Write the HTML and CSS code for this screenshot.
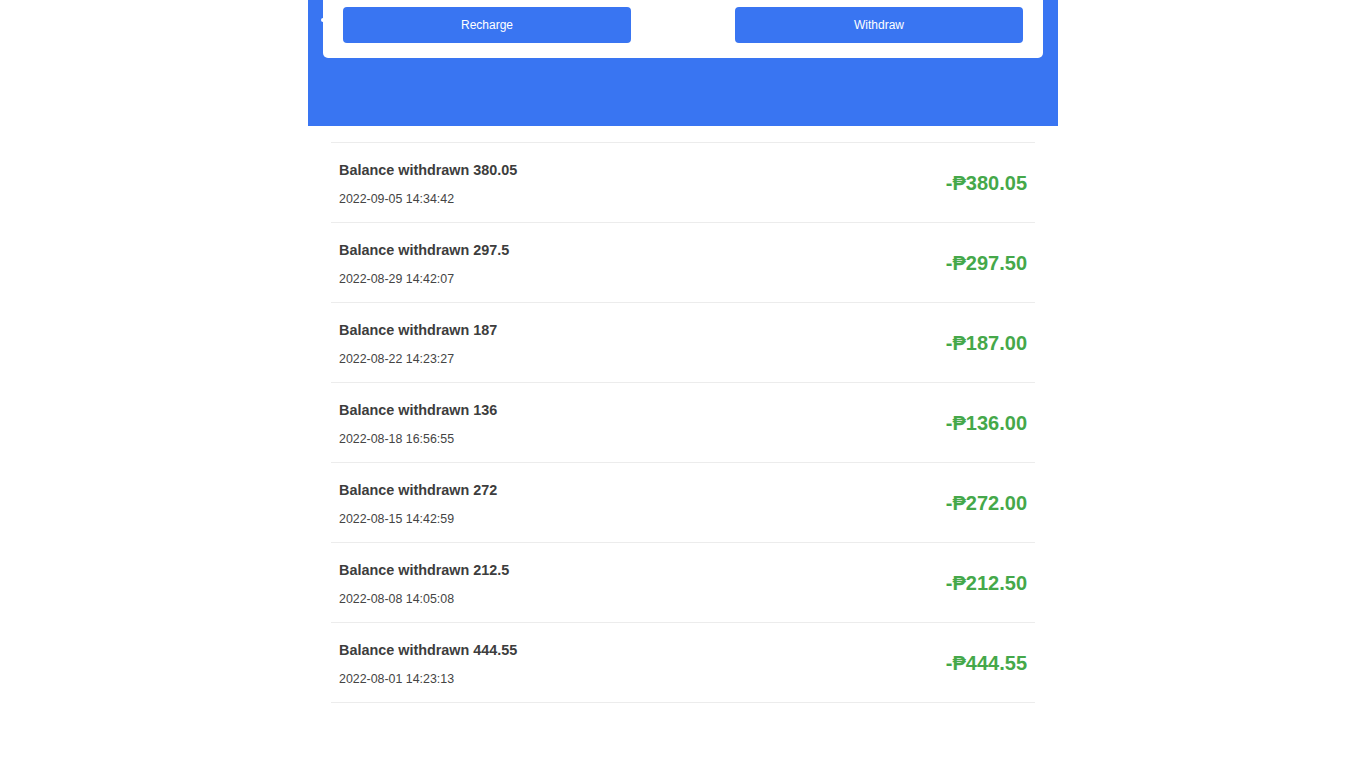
FILE: index.html
```html
<!DOCTYPE html>
<html lang="en">
<head>
  <meta charset="UTF-8">
  <title>Balance Records</title>
  <link rel="stylesheet" href="styles.css">
</head>
<body>
  <div class="page">
    <!-- Wallet header -->
    <header class="top">
      <div class="card">
        <div class="actions">
          <button class="btn">Recharge</button>
          <button class="btn">Withdraw</button>
        </div>
      </div>
    </header>

    <!-- Withdraw records -->
    <ul class="records">
      <li class="record">
        <div class="info">
          <p class="title">Balance withdrawn 380.05</p>
          <p class="time">2022-09-05 14:34:42</p>
        </div>
        <span class="amount">-₱380.05</span>
      </li>
      <li class="record">
        <div class="info">
          <p class="title">Balance withdrawn 297.5</p>
          <p class="time">2022-08-29 14:42:07</p>
        </div>
        <span class="amount">-₱297.50</span>
      </li>
      <li class="record">
        <div class="info">
          <p class="title">Balance withdrawn 187</p>
          <p class="time">2022-08-22 14:23:27</p>
        </div>
        <span class="amount">-₱187.00</span>
      </li>
      <li class="record">
        <div class="info">
          <p class="title">Balance withdrawn 136</p>
          <p class="time">2022-08-18 16:56:55</p>
        </div>
        <span class="amount">-₱136.00</span>
      </li>
      <li class="record">
        <div class="info">
          <p class="title">Balance withdrawn 272</p>
          <p class="time">2022-08-15 14:42:59</p>
        </div>
        <span class="amount">-₱272.00</span>
      </li>
      <li class="record">
        <div class="info">
          <p class="title">Balance withdrawn 212.5</p>
          <p class="time">2022-08-08 14:05:08</p>
        </div>
        <span class="amount">-₱212.50</span>
      </li>
      <li class="record">
        <div class="info">
          <p class="title">Balance withdrawn 444.55</p>
          <p class="time">2022-08-01 14:23:13</p>
        </div>
        <span class="amount">-₱444.55</span>
      </li>
    </ul>
  </div>
</body>
</html>
```

FILE: styles.css
```css
body {
  margin: 0;
  background: #fff;
  font-family: "Liberation Sans", Arial, sans-serif;
  color: #333;
}
.page {
  width: 750px;
  margin: 0 auto;
}
.top {
  background: #3975f2;
  height: 126px;
  padding: 0 15px;
  box-sizing: border-box;
}
.card {
  position: relative;
  background: #fff;
  border-radius: 0 0 5px 5px;
  height: 58px;
}
/* small tab peeking out on the left edge */
.card::before {
  content: "";
  position: absolute;
  left: -2px;
  top: 18px;
  width: 3px;
  height: 4px;
  background: #fff;
  border-radius: 2px 0 0 2px;
}
.actions {
  display: flex;
  justify-content: space-between;
  padding: 7px 20px 0;
}
.btn {
  width: 288px;
  height: 36px;
  border: none;
  border-radius: 4px;
  background: #3975f2;
  color: #fff;
  font-family: inherit;
  font-size: 12px;
  cursor: pointer;
}
.records {
  list-style: none;
  margin: 16px 23px 0;
  padding: 0;
  border-top: 1px solid #ececec;
}
.record {
  display: flex;
  justify-content: space-between;
  align-items: center;
  height: 79px;
  padding: 0 8px;
  border-bottom: 1px solid #ececec;
}
.info {
  padding-top: 2px;
}
.info p {
  margin: 0;
}
.title {
  font-size: 14.4px;
  font-weight: bold;
  color: #3d3d3d;
}
.time {
  font-size: 12.4px;
  color: #444;
  margin-top: 14px !important;
}
.amount {
  font-size: 20px;
  font-weight: bold;
  color: #45a84a;
  padding-top: 2px;
}
```
